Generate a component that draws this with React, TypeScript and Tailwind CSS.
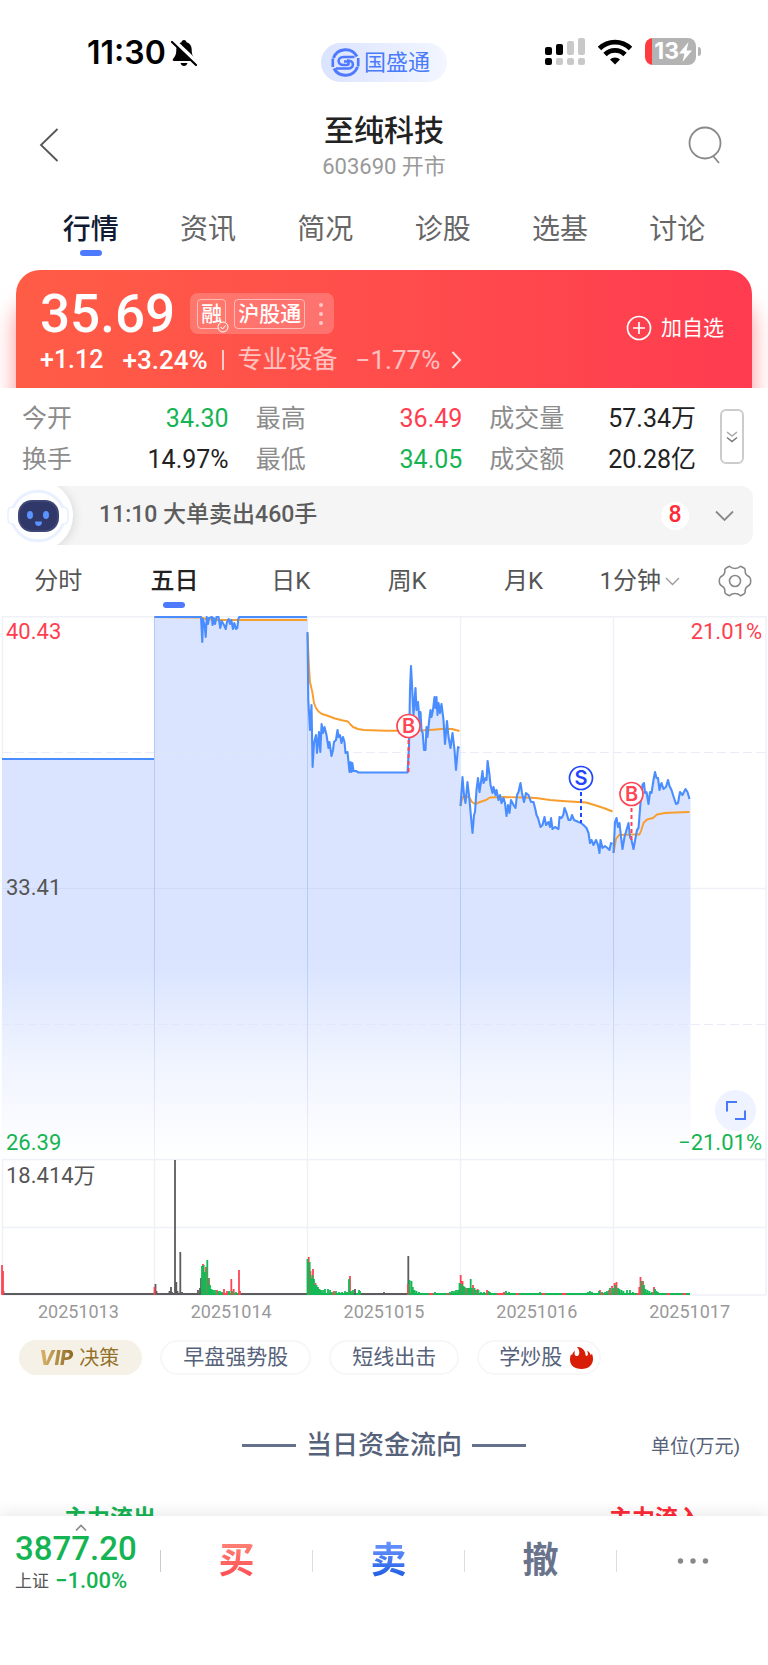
import { useState } from 'react';

const TABS = ['行情', '资讯', '简况', '诊股', '选基', '讨论'];
const PERIODS = ['分时', '五日', '日K', '周K', '月K'];
const DATES = ['20251013', '20251014', '20251015', '20251016', '20251017'];

const STATS = [
    { label: '今开', value: '34.30', color: 'text-[#15b453]' },
    { label: '最高', value: '36.49', color: 'text-[#ff3d4f]' },
    { label: '成交量', value: '57.34万', color: 'text-[#222]' },
    { label: '换手', value: '14.97%', color: 'text-[#222]' },
    { label: '最低', value: '34.05', color: 'text-[#15b453]' },
    { label: '成交额', value: '20.28亿', color: 'text-[#222]' },
];

// one polyline per trading day, in chart units
const PRICE = [
    '2,143 154,143',
    '154.5,1 201,1 202.3,26 203,3 204.7,10 205.7,21 206.7,1 208,8 209,2 212,1 212.5,9 213.7,2 215,8 216.5,1 218.5,1 220.3,12 221.7,5 224,9 225.7,13 227,6 228.7,3 230,8 231.3,4 233,13 234.3,7 236,13 237.3,12 238.3,3 239.3,1 307,1',
    '307.5,16 308.3,84 310,114 311.5,89 312.6,151 314,127 316,119 317,137 319,116 320.3,136 321.6,108 323,117 324.5,111 326.5,119 328.5,132 329.5,126 331.5,140 333,134 334,126 336,124 337.5,114 338.5,121 340,119 341.5,127 343,121 344.5,126 345.5,137 347.5,136 349.5,156 350.5,146 351.5,156 352.3,147 353.5,155 356,155 358.5,156.5 407.5,156.5 409,131 410,74 411,50 412,69 413.5,99 415.5,72 416.5,94 418,86 419.5,104 420.5,96 421.5,114 422.7,117 424,134 425.5,134 426.5,111 427.5,121 429,106 430.5,94 431.5,101 433,94 434.5,81 435.5,92 436.5,81 437.5,99 438.5,87 440,97 441.5,88 443.5,104 445,128 447,105 448.5,121 450.5,132 452.5,117 454.5,134 456,154 458,131 459.5,132',
    '460.5,190 462.5,161 464,179 465.5,187 467.5,166 469.5,184 471,201 472.5,217 474,199 475,196 476.5,174 478,162 479.5,176 481,166 482.5,155 483.5,167 485.5,162 486.5,164 487.6,145 489.5,159 490.5,169 492.5,177 493.5,171 495.5,179 496.5,174 498.5,184 500,179 501.5,187 503.5,182 505,187 506.5,200 508,189 509.5,197 511,184 513.5,189 515.5,192 517,179 518.5,176 520.5,167 522,177 524,186 526,177 528.5,179 531,186 533.5,186 535.5,194 536.5,199 538,202 540.5,211 542.5,209 544.5,201 546,209 548.5,206 550,211 551,202 552.5,213 555,211 558.5,213 559.5,201 561.5,202 563.3,199 564.5,192 566.5,197 568.5,204 570.5,204 572,199 574,204 578.5,206 581,207 583.5,209 586.5,212 588.5,217 590,227 591.5,224 593.5,229 596,224 598,229 599.5,237 600.5,224 602.5,232 605,230 607.5,232 609.5,234 611,227 612.5,228',
    '613.5,237 615,206 616.5,202 618,211 619.5,207 621,221 622.5,233 624.5,221 626.5,214 628.5,207 630,221 631.5,224 633.5,233 635.5,222 637,214 638.5,212 640.5,187 642.5,169 644,167 645,177 646.5,176 648.5,188 650,176 651.5,177 653.5,164 655,156 656.5,162 658,162 659.5,174 661.5,167 663.5,173 666,171 668,164 669.5,170 671.5,174 674,182 676,188 678,187 680,176 682.5,179 685.5,173 687.5,176 689.5,183',
];

const AVERAGE = [
    '154.5,1 201,1.5 206,3 216,4 307,4',
    '307.5,18 309,50 310,66 312.3,76 314,87 316,92 318.5,95.5 322,98 327,99.5 335,102.5 343,104.5 348,105.5 350,108 353,111 358,113 364,114 386,114.7 407,114.7 421,114.5 433,113.7 442,113 452,113 459.5,115',
    '460.5,190 462.5,181 469,181 472,186 475,188 480,186 486,184 490,181.5 500,181 525,181.5 536,182 550,184 562,185 586,186.5 596,189.5 605,192.5 612.5,195.5',
    '613.5,237 616,223 619,219 631,218.5 639.5,218.5 641,215 643.5,207 647,203.5 653,202 657,198.5 665,197 675,196.5 689.5,196',
];

const GREY = '#5c5c5c';
const RED = '#ff4453';
const GREEN = '#14b854';

// [x, height] pairs of the volume histogram
const VOLUME = [
    { color: GREY, bars: [[3.5, 4], [155.5, 11], [156.5, 4], [169.5, 4], [171, 8], [172, 3], [175, 135], [176.3, 13], [177.5, 4], [180.3, 43], [182, 3], [198, 5], [200, 7], [201, 17], [301, 2], [355, 6], [384, 3], [408.3, 39]] },
    { color: RED, bars: [[2, 30], [3, 24], [154.5, 8], [203, 31], [206, 28], [209, 17], [217, 5], [224, 6], [227, 4], [231.3, 16], [233.7, 6], [239, 25], [240, 4], [308.7, 38], [310.5, 24], [313, 26], [315.5, 12], [334, 4], [350, 19], [408, 11], [460.7, 20], [462.5, 14], [466, 7], [473, 10], [477.5, 6], [487, 5], [504, 3], [600, 5], [609, 5], [612, 9], [614.5, 12], [616.5, 13], [639.3, 8], [640.5, 18], [643, 14], [654, 8]] },
    { color: GREEN, bars: [[202, 29], [203.7, 30], [205, 23], [207.3, 35], [208.3, 17], [210, 10], [211.5, 6], [213, 5], [215, 5], [218, 4], [220, 4], [222, 3], [229, 4], [232, 4], [236, 3], [307.5, 36], [309.7, 33], [311.3, 17], [312.3, 20], [314, 16], [315, 10], [316.5, 10], [318, 8], [319.5, 6], [321, 5], [323, 5], [325, 6], [328, 6], [330, 5], [332, 3], [336, 4], [339, 3], [342, 3], [345, 4], [347, 3], [349, 16], [351, 4], [353, 5], [359, 5], [360, 4], [409.5, 15], [411.5, 14], [412.8, 8], [414.5, 5], [416.5, 4], [419, 3], [423, 2], [435, 3], [437, 2], [450, 3], [452, 4], [454, 4], [456, 5], [458, 5], [459.5, 12], [461.7, 11], [463.5, 9], [464.7, 8], [467.5, 7], [469, 7], [470.7, 16], [472, 7], [474.5, 7], [476, 5], [478.5, 5], [481, 3], [484, 3], [488.5, 4], [490, 3], [506, 4], [509, 3], [540, 3], [550, 2], [588, 3], [590, 4], [592, 3], [599, 4], [602, 3], [605, 3], [607, 4], [610, 7], [613, 7], [615.5, 10], [618, 7], [619.5, 6], [621.5, 5], [623.5, 4], [627, 5], [630, 5], [633, 3], [636, 2], [641.8, 14], [644, 10], [645.5, 6], [647.5, 5], [649.5, 4], [652, 3], [655, 6], [656.5, 4], [658, 3], [676, 2]] },
];

const MARKS = [
    { letter: 'B', x: 408.5, y: 110, end: 156, color: '#ff4453' },
    { letter: 'S', x: 581, y: 162, end: 207, color: '#1f45ff' },
    { letter: 'B', x: 631.5, y: 178, end: 224, color: '#ff4453' },
];

function areaPath(points: string) {
    const list = points.split(' ');
    const first = list[0].split(',')[0];
    const [lastX, lastY] = list[list.length - 1].split(',');
    // run one unit on so that neighbouring days touch
    const end = Number(lastX) + 1;
    return `M${first},544 L${list.join(' L')} L${end},${lastY} L${end},544 Z`;
}

function StatusBar() {
    return (
        <div className="grid h-24 grid-cols-3 items-start pt-[38px] text-black">
            <div className="flex items-center gap-1 pl-[87px] [font-family:Inter,sans-serif]">
                <span className="text-[32px] leading-[30px] font-semibold">11:30</span>
                <svg width="28" height="28" viewBox="0 0 28 28">
                    <path d="M14 1c-1.500 0-2.500 1-2.500 2.300C8 4.300 6.300 7 6.300 10.500c0 5-1 6.500-3.300 9.500-.7 1-.2 2 1 2h20c1.200 0 1.700-1 1-2-2.300-3-3.300-4.500-3.300-9.500 0-3.500-1.700-6.200-5.200-7.200C16.500 2 15.500 1 14 1z" />
                    <path d="M10.500 24h7c-.5 1.800-1.800 3-3.500 3s-3-1.200-3.500-3z" />
                    <path d="M3.500 1.500 27.500 24.500" stroke="#fff" strokeWidth="4.500" />
                    <path d="M2 3 26 26" stroke="#000" strokeWidth="2.200" strokeLinecap="round" />
                </svg>
            </div>
            <div className="mt-[5px] flex h-[39px] w-[126px] items-center gap-1 justify-self-center rounded-full bg-linear-to-r from-[#dbe4ff] to-[#f3f6ff] pl-[10px]">
                <svg width="29" height="29" viewBox="0 0 29 29" fill="none" stroke="#4f79ff">
                    <path d="M26 8.500A13 13 0 0 0 2.500 10M3 20.500A13 13 0 0 0 26.500 19" strokeWidth="3" />
                    <path d="M23.500 9H12.500c-6.500 0-6.500 8 0 8h3.500c2.200 0 2.200-3.500 0-3.500h-3" strokeWidth="2.600" />
                    <path d="M5 20.500h12c6.500 0 6.500-8 0-8h-1" strokeWidth="2.600" />
                    <path d="M1.800 10.500v8.500M27.200 10v8.500" strokeWidth="2.600" />
                </svg>
                <span className="text-[22px] leading-8 text-[#4a7bfa]">国盛通</span>
            </div>
            <div className="flex items-center gap-[13px] justify-self-end pr-[67px]">
                <svg width="40" height="27" viewBox="0 0 40 27" fill="#c9c9c9">
                    <rect y="9" width="7" height="8" rx="2" fill="#000" />
                    <rect x="11" y="6" width="7" height="11" rx="2" fill="#000" />
                    <rect x="22" y="3" width="7" height="14" rx="2" />
                    <rect x="33" width="7" height="17" rx="2" />
                    <rect y="20" width="7" height="7" rx="2" fill="#000" />
                    <rect x="11" y="20" width="7" height="7" rx="2" />
                    <rect x="22" y="20" width="7" height="7" rx="2" />
                    <rect x="33" y="20" width="7" height="7" rx="2" />
                </svg>
                <svg width="34" height="26" viewBox="0 0 34 26" fill="none" stroke="#000" strokeWidth="4.800">
                    <path d="M1.500 9.500a22 22 0 0 1 31 0" />
                    <path d="M7 15.500a14.200 14.200 0 0 1 20 0" />
                    <path d="M17 25.500l-5-5a7 7 0 0 1 10 0z" fill="#000" stroke="none" />
                </svg>
                <div className="flex items-center gap-[2px]">
                    <div className="flex h-[27px] w-[51px] items-center justify-end overflow-hidden rounded-lg bg-linear-to-r from-[#ff3b3f] from-[13%] to-[#b3b3b3] to-[13%] pr-1 text-white">
                        <span className="text-[23px] leading-[27px] font-bold [font-family:Inter,sans-serif]">13</span>
                        <svg width="13" height="20" viewBox="0 0 13 20" fill="#fff">
                            <path d="M9.500 0 0 11.500h5.500L3.500 20 13 8.500H7.500z" />
                        </svg>
                    </div>
                    <div className="h-[9px] w-[3px] rounded-r-full bg-[#b3b3b3]" />
                </div>
            </div>
        </div>
    );
}

function Header() {
    return (
        <header className="flex h-[98px] items-center justify-between pr-[46px] pl-[39px]">
            <button type="button" aria-label="返回" className="w-[41px]">
                <svg width="20" height="34" viewBox="0 0 20 34" fill="none" stroke="#555" strokeWidth="1.800">
                    <path d="M18.500 1 2 17l16.500 16" />
                </svg>
            </button>
            <div className="pt-[3px] text-center">
                <h1 className="text-[30px] leading-10 font-medium text-[#222]">至纯科技</h1>
                <p className="text-[22px] leading-8 text-[#999]">603690 开市</p>
            </div>
            <button type="button" aria-label="搜索">
                <svg width="34" height="38" viewBox="0 0 34 38" fill="none" stroke="#888" strokeWidth="1.800">
                    <circle cx="17" cy="17" r="15.500" />
                    <path d="M25.500 30.500 31 37" />
                </svg>
            </button>
        </header>
    );
}

function QuoteCard() {
    return (
        <section className="px-4">
            <div className="flex items-center justify-between rounded-t-3xl bg-linear-to-r from-[#ff5c46] to-[#ff3b50] pt-4 pr-7 pb-[11px] pl-6 text-white shadow-[0_32px_22px_0_rgba(255,70,75,0.6)]">
                <div>
                    <div className="flex h-[55px] items-center gap-[15px]">
                        <span className="text-[53px] leading-[54px] font-medium">35.69</span>
                        <button type="button" className="flex h-[41px] items-center gap-2 rounded-lg bg-white/20 px-[7px] text-[21px] leading-7 font-medium">
                            <span className="relative rounded border border-white/50 px-[3px]">
                                融
                                <svg className="absolute -right-1 -bottom-[5px]" width="12" height="12" viewBox="0 0 12 12" fill="#ff7c70" stroke="#fff">
                                    <circle cx="6" cy="6" r="5" />
                                    <path d="M3.500 6l2 2 3-3.500" />
                                </svg>
                            </span>
                            <span className="rounded border border-white/50 px-[3px]">沪股通</span>
                            <svg width="14" height="24" viewBox="0 0 14 24" fill="#fff" fillOpacity=".6">
                                <circle cx="8" cy="3" r="2" />
                                <circle cx="8" cy="12" r="2" />
                                <circle cx="8" cy="21" r="2" />
                            </svg>
                        </button>
                    </div>
                    <div className="flex h-9 items-center pt-[2px] text-[25px] leading-9">
                        <span className="mr-[19px] font-medium">+1.12</span>
                        <span className="text-[26px] font-medium">+3.24%</span>
                        <span className="mx-[14px] h-5 w-[2px] bg-white/70" />
                        <a href="#sector" className="flex items-center text-white/65">
                            专业设备
                            <span className="ml-[18px] text-[26px]">−1.77%</span>
                            <svg className="ml-[11px]" width="11" height="18" viewBox="0 0 11 18" fill="none" stroke="#fff" strokeOpacity=".8" strokeWidth="2">
                                <path d="M1.500 1l7.500 8-7.500 8" />
                            </svg>
                        </a>
                    </div>
                </div>
                <button type="button" className="flex items-center gap-[9px] pb-2 text-[21px] leading-8">
                    <svg width="26" height="26" viewBox="0 0 26 26" fill="none" stroke="#fff" strokeWidth="1.700">
                        <circle cx="13" cy="13" r="11.500" />
                        <path d="M13 7v12M7 13h12" />
                    </svg>
                    加自选
                </button>
            </div>
        </section>
    );
}

function Stats() {
    return (
        <section className="relative flex items-start bg-white pt-[10px] pr-6 pb-[6px] pl-[22px]">
            <dl className="grid flex-1 grid-cols-3 gap-x-[27px] text-[25px] leading-[41px]">
                {STATS.map((s) => (
                    <div key={s.label} className="flex justify-between">
                        <dt className="text-[#8c8c8c]">{s.label}</dt>
                        <dd className={s.color}>{s.value}</dd>
                    </div>
                ))}
            </dl>
            <button type="button" aria-label="更多数据" className="mt-[11px] ml-6 flex h-[55px] w-6 items-center justify-center rounded-md border-2 border-[#ccc]">
                <svg width="12" height="12" viewBox="0 0 12 12" fill="none" strokeWidth="1.600">
                    <path d="M1 1l5 4 5-4" stroke="#aaa" />
                    <path d="M1 6.500l5 4 5-4" stroke="#777" />
                </svg>
            </button>
        </section>
    );
}

function Notice() {
    return (
        <section className="relative mr-[15px] flex h-[59px] items-center rounded-r-xl bg-linear-to-r from-white from-[2%] to-[#f5f5f5] to-[5%] pl-[3px] text-[23px]">
            <svg width="84" height="59" viewBox="0 0 84 59">
                <defs>
                    <radialGradient id="halo" gradientUnits="userSpaceOnUse" cx="38" cy="31" r="44">
                        <stop offset="0.750" stopColor="#e6e6e6" />
                        <stop offset="1" stopColor="#f5f5f5" stopOpacity="0" />
                    </radialGradient>
                </defs>
                <rect x="35" width="49" height="59" fill="url(#halo)" />
                <circle cx="35" cy="29.500" r="35" fill="#fff" />
                <path d="M10 22a27 27 0 0 1 50 0M10 38a27 27 0 0 0 50 0" fill="none" stroke="#e9f0ff" strokeWidth="3" />
                <path d="M10 21c-3 0-5 2-5 5v7c0 3 2 5 5 5M60 21c3 0 5 2 5 5v7c0 3-2 5-5 5" fill="none" stroke="#e9f0ff" strokeWidth="1.500" />
                <rect x="15" y="14" width="41" height="32" rx="14" fill="#3d4677" />
                <rect x="17" y="16" width="37" height="28" rx="12" fill="#30386a" />
                <ellipse cx="27" cy="29" rx="3" ry="4" fill="#5b93ff" />
                <ellipse cx="43" cy="29" rx="3" ry="4" fill="#5b93ff" />
                <path d="M32 35.500h7c0 3-1.500 4.500-3.500 4.500s-3.500-1.500-3.500-4.500z" fill="#5b93ff" />
            </svg>
            <a href="#orders" className="ml-3 flex-1 font-medium text-[#5c5c5c]">11:10 大单卖出460手</a>
            <span className="flex h-7 w-7 items-center justify-center rounded-full bg-white font-medium text-[#ff2a36]">8</span>
            <button type="button" aria-label="展开" className="mr-[19px] ml-[26px]">
                <svg width="19" height="12" viewBox="0 0 19 12" fill="none" stroke="#888" strokeWidth="1.800">
                    <path d="M1 1.500l8.500 8.500L18 1.500" />
                </svg>
            </button>
        </section>
    );
}

function Chart() {
    return (
        <section className="relative">
            <svg className="block w-full" viewBox="0 0 768 680">
                <defs>
                    <linearGradient id="area" gradientUnits="userSpaceOnUse" x1="0" y1="0" x2="0" y2="544">
                        <stop offset="0.640" stopColor="#dae4ff" />
                        <stop offset="0.820" stopColor="#f0f4ff" />
                        <stop offset="1" stopColor="#fff" />
                    </linearGradient>
                    <linearGradient id="divider" gradientUnits="userSpaceOnUse" x1="0" y1="0" x2="0" y2="544">
                        <stop offset="0.600" stopColor="#b4caf8" />
                        <stop offset="1" stopColor="#eef1f8" />
                    </linearGradient>
                </defs>

                <g stroke="#f0f1f7" strokeWidth="1.500" fill="none">
                    <path d="M2 .8h764M2 272.500h764M2 543.500h764M2 611.500h764M2 679h764M2.500 0v679M766 0v679" />
                    <path d="M154.500 0v679M307.500 0v679M460.500 0v679M613.500 0v679" />
                </g>
                {PRICE.map((p) => <path key={p} d={areaPath(p)} fill="url(#area)" />)}
                <path d="M2 136.500h764M2 408.500h764" stroke="#e0e6f4" strokeOpacity=".7" strokeDasharray="9 4" />
                <path d="M2 272.500h688" stroke="#d0daf2" />
                <path d="M2 543.500h764" stroke="#f0f1f7" strokeWidth="1.500" />
                <g fill="url(#divider)">
                    <rect x="154" y="1" width="1" height="543" />
                    <rect x="307" y="16" width="1" height="528" />
                    <rect x="460" y="180" width="1" height="364" />
                    <rect x="613" y="232" width="1" height="312" />
                </g>

                <g fill="none" strokeLinejoin="round">
                    {AVERAGE.map((p) => <polyline key={p} points={p} stroke="#f99d2d" strokeWidth="1.900" />)}
                    {PRICE.map((p) => <polyline key={p} points={p} stroke="#4a8dff" strokeWidth="2.100" />)}
                </g>

                {MARKS.map((m) => (
                    <g key={m.x}>
                        <path d={`M${m.x} ${m.y + 14}V${m.end}`} stroke={m.color} strokeWidth="2" strokeDasharray="4 3" />
                        <circle cx={m.x} cy={m.y} r="11.500" fill="#fff" stroke={m.color} strokeWidth="1.700" />
                        <text x={m.x} y={m.y + 7} textAnchor="middle" fontSize="20" fontWeight="600" fill={m.color} className="[font-family:Inter,sans-serif]">
                            {m.letter}
                        </text>
                    </g>
                ))}

                <path d="M2 678h406" stroke={GREY} strokeWidth="2" />
                <path d="M201 678h39M307 678h53M408 678h282" stroke={GREEN} strokeWidth="2" />
                <path d="M222 678h4M230 678h3M331 678h3M350 678h3M429 678h4M447 678h3M497 678h6M516 678h3M542 678h3M562 678h4M602 678h4M637 678h4M667 678h3M683 678h3" stroke={RED} strokeWidth="2" />
                {VOLUME.map((v) => (
                    <path key={v.color} d={v.bars.map(([x, h]) => `M${x} 679v-${h}`).join('')} stroke={v.color} strokeWidth="1.800" />
                ))}

                <g fontSize="22">
                    <text x="6" y="23" fill="#ff3d4f">40.43</text>
                    <text x="762" y="23" textAnchor="end" fill="#ff3d4f">21.01%</text>
                    <text x="6" y="279" fill="#555">33.41</text>
                    <text x="6" y="534" fill="#15b453">26.39</text>
                    <text x="762" y="534" textAnchor="end" fill="#15b453">−21.01%</text>
                    <text x="6" y="567" fill="#555">18.414万</text>
                </g>
            </svg>
            <button type="button" aria-label="全屏" className="absolute right-3 bottom-[165px] flex h-[41px] w-[41px] items-center justify-center rounded-full bg-[#eff3ff]">
                <svg width="20" height="20" viewBox="0 0 20 20" fill="none" stroke="#4a78fa" strokeWidth="2">
                    <path d="M1 10.500V1h10M19 9.500V18H9" />
                </svg>
            </button>
        </section>
    );
}

function Chips() {
    const chip = 'h-[35px] rounded-full border-2 border-[#f7f7f8] px-[21px] text-[21px] leading-[31px] text-[#56617a]';
    return (
        <div className="mt-3 flex gap-[18px] pl-[19px]">
            <button type="button" className="flex h-[35px] items-center gap-1 rounded-full bg-[#f6f1e6] pr-[23px] pl-5 text-[20px] text-[#94712a]">
                <span className="bg-linear-to-r from-[#dcb76c] to-[#8a6720] bg-clip-text pr-[2px] font-extrabold text-transparent italic [font-family:Inter,sans-serif]">VIP</span>
                决策
            </button>
            <button type="button" className={chip}>早盘强势股</button>
            <button type="button" className={chip}>短线出击</button>
            <button type="button" className="flex h-[35px] items-center gap-2 rounded-full border-2 border-[#f7f7f8] pr-[6px] pl-5 text-[21px] leading-[31px] text-[#56617a]">
                学炒股
                <svg width="23" height="22" viewBox="0 0 23 22" fill="#d81e06">
                    <path d="M7 0c4.500 0 8 2.500 8.500 7.500.1 1.800 1.900 2 2.300.3.300-1.500-.2-3-.9-4.300 2.200 1.200 3.300 2.800 3.800 4.800l1.300-1.500c.7 1.700 1 3.500 1 5.200 0 6-4.500 10-11.500 10S0 18.500 0 12.500c0-2 .3-3.800 1-5.300l1 1c.4-1.800 1.300-3.300 3-4.500-.5 1.800-.8 3.700.3 4.800 1.500 1.300 3.300.3 3.800-1.300C9.800 4.700 8.800 1.800 7 0z" />
                </svg>
            </button>
        </div>
    );
}

function BottomBar() {
    return (
        <footer className="relative flex h-[149px] shrink-0 items-start bg-white shadow-[0_-4px_14px_rgba(0,0,0,0.08)]">
            <a href="#index" className="flex w-[160px] flex-col pt-2 pl-[15px]">
                <svg className="ml-[60px]" width="12" height="7" viewBox="0 0 12 7" fill="none" stroke="#888" strokeWidth="1.600">
                    <path d="M1 6.500l5-5 5 5" />
                </svg>
                <span className="pt-px text-[33px] leading-[34px] font-medium text-[#15b453]">3877.20</span>
                <span className="flex items-center gap-[6px] text-[17px] leading-[30px] text-[#555]">
                    上证
                    <span className="text-[22px] font-medium text-[#15b453]">−1.00%</span>
                </span>
            </a>
            <div className="mt-[25px] grid flex-1 grid-cols-4 text-[36px] leading-10 font-medium">
                <div className="flex items-center before:h-[22px] before:w-px before:bg-[#ccc]">
                    <button type="button" className="flex-1 bg-linear-to-b from-[#ff8276] to-[#ff454f] bg-clip-text font-bold text-transparent">买</button>
                </div>
                <div className="flex items-center before:h-[22px] before:w-px before:bg-[#ddd]">
                    <button type="button" className="flex-1 bg-linear-to-b from-[#6d96ff] to-[#1257e0] bg-clip-text font-bold text-transparent">卖</button>
                </div>
                <div className="flex items-center before:h-[22px] before:w-px before:bg-[#ddd]">
                    <button type="button" className="flex-1 font-bold text-[#69748c]">撤</button>
                </div>
                <div className="flex items-center before:h-[22px] before:w-px before:bg-[#ddd]">
                    <button type="button" aria-label="更多" className="flex flex-1 justify-center">
                        <svg width="32" height="6" viewBox="0 0 32 6" fill="#888">
                            <circle cx="3.500" cy="3" r="2.700" />
                            <circle cx="16" cy="3" r="2.700" />
                            <circle cx="28.500" cy="3" r="2.700" />
                        </svg>
                    </button>
                </div>
            </div>
        </footer>
    );
}

export default function App() {
    const [tab, setTab] = useState('行情');
    const [period, setPeriod] = useState('五日');

    return (
        <div lang="zh-CN" className="flex h-screen flex-col overflow-hidden bg-white [font-family:Roboto,'Noto_Sans_CJK_SC',sans-serif]">
            <main className="min-h-0 flex-1 overflow-hidden">
                <StatusBar />
                <Header />

                <nav className="grid h-[76px] grid-cols-6 px-8 pt-4 text-[28px] leading-10">
                    {TABS.map((t) => (
                        <button key={t} type="button" onClick={() => setTab(t)} className={`flex flex-col items-center ${t === tab ? 'font-medium text-[#111a33]' : 'text-[#666]'}`}>
                            {t}
                            {t === tab && <span className="h-[6px] w-[22px] rounded-sm bg-[#4d7aff]" />}
                        </button>
                    ))}
                </nav>

                <QuoteCard />
                <Stats />
                <Notice />

                <nav className="flex h-[71px] pt-4 text-[24px] leading-10 text-[#555]">
                    <div className="grid flex-1 grid-cols-6">
                        {PERIODS.map((p) => (
                            <button key={p} type="button" onClick={() => setPeriod(p)} className={`flex flex-col items-center ${p === period ? 'font-medium text-[#222]' : ''}`}>
                                {p}
                                {p === period && <span className="mt-px h-[6px] w-[22px] rounded-full bg-[#4d7aff]" />}
                            </button>
                        ))}
                        <button type="button" className="flex h-10 items-center justify-center gap-1">
                            1分钟
                            <svg width="15" height="9" viewBox="0 0 15 9" fill="none" stroke="#999" strokeWidth="1.300">
                                <path d="M1 1l6.500 6.500L14 1" />
                            </svg>
                        </button>
                    </div>
                    <button type="button" aria-label="设置" className="mr-4 ml-5 flex h-10 items-center">
                        <svg width="34" height="32" viewBox="0 0 34 32" fill="none" stroke="#888" strokeWidth="1.600" strokeLinejoin="round">
                            <path d="M8.500 2.800l3-1.500c1.500 1.500 3.300 2.200 5.500 2.200s4-.7 5.500-2.200l3 1.500c1 .6 1.800 1.300 1.700 2.500-.3 2.700.3 4.200 2.800 5.700l1.500 1c.8.700 1.200 2.300 1.200 4s-.4 3.300-1.200 4l-1.500 1c-2.500 1.500-3.100 3-2.800 5.700.1 1.200-.7 1.900-1.700 2.500l-3 1.500c-1.500-1.500-3.300-2.200-5.500-2.200s-4 .7-5.500 2.200l-3-1.500c-1-.6-1.800-1.300-1.700-2.500.3-2.700-.3-4.200-2.800-5.700l-1.500-1c-.8-.7-1.200-2.300-1.200-4s.4-3.300 1.200-4l1.500-1c2.500-1.500 3.100-3 2.800-5.700-.1-1.200.7-1.900 1.700-2.500z" />
                            <circle cx="17" cy="16" r="5.500" />
                        </svg>
                    </button>
                </nav>

                <Chart />
                <div className="grid grid-cols-5 px-[2px] text-center text-[18px] leading-8 text-[#999]">
                    {DATES.map((d) => <span key={d}>{d}</span>)}
                </div>
                <Chips />

                <section className="mt-[50px]">
                    <div className="grid grid-cols-[1fr_auto_1fr] items-center pr-7 pl-7 text-[#56617a]">
                        <h2 className="col-start-2 flex items-center gap-[10px] text-[26px] leading-10 font-medium before:h-[3px] before:w-[54px] before:bg-[#65718a] after:h-[3px] after:w-[54px] after:bg-[#65718a]">
                            当日资金流向
                        </h2>
                        <span className="justify-self-end pt-1 text-[19px]">单位(万元)</span>
                    </div>
                    <div className="mt-[38px] flex justify-between pr-[67px] pl-[64px] text-[23px] leading-8 font-bold">
                        <span className="text-[#15b453]">主力流出</span>
                        <span className="text-[#ff2a36]">主力流入</span>
                    </div>
                </section>
            </main>
            <BottomBar />
        </div>
    );
}
